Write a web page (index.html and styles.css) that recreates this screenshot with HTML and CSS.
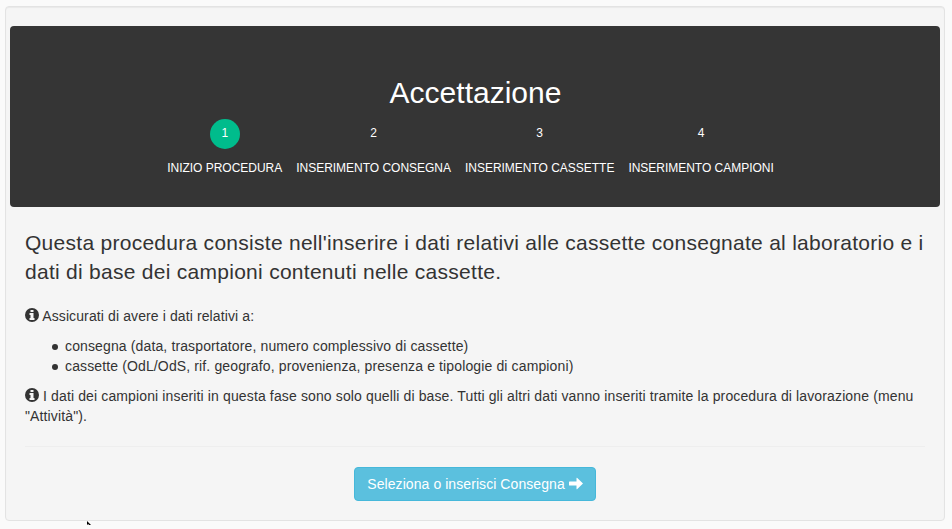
FILE: index.html
```html
<!DOCTYPE html>
<html lang="it">
<head>
<meta charset="utf-8">
<title>Accettazione</title>
<link rel="stylesheet" href="styles.css">
</head>
<body>
<main class="well">
  <header class="wizard">
    <h1>Accettazione</h1>
    <ol class="steps">
      <li><span class="num active">1</span><span class="label">Inizio procedura</span></li>
      <li><span class="num">2</span><span class="label">Inserimento consegna</span></li>
      <li><span class="num">3</span><span class="label">Inserimento cassette</span></li>
      <li><span class="num">4</span><span class="label">Inserimento campioni</span></li>
    </ol>
  </header>
  <section class="content">
    <p class="lead">Questa procedura consiste nell'inserire i dati relativi alle cassette consegnate al laboratorio e i dati di base dei campioni contenuti nelle cassette.</p>
    <p class="intro"><svg class="icon" viewBox="0 0 14 14"><circle cx="7" cy="7" r="7"/><path class="cut" d="M5.500 2h3v2h-3zM4.500 5h4v5h1v2h-5v-2h1V7h-1z"/></svg> Assicurati di avere i dati relativi a:</p>
    <ul>
      <li>consegna (data, trasportatore, numero complessivo di cassette)</li>
      <li>cassette (OdL/OdS, rif. geografo, provenienza, presenza e tipologie di campioni)</li>
    </ul>
    <p><svg class="icon" viewBox="0 0 14 14"><circle cx="7" cy="7" r="7"/><path class="cut" d="M5.500 2h3v2h-3zM4.500 5h4v5h1v2h-5v-2h1V7h-1z"/></svg> I dati dei campioni inseriti in questa fase sono solo quelli di base. Tutti gli altri dati vanno inseriti tramite la procedura di lavorazione (menu "Attività").</p>
    <hr>
    <div class="actions"><button class="btn" type="button">Seleziona o inserisci Consegna <svg class="icon" viewBox="0 0 14 14"><path d="M.5 5.500h7V2.300q0-1 .8-.3L14 7.500l-5.700 5.500q-.8.700-.8-.3V9.500h-7Q0 9.500 0 9V6q0-.5.500-.5z"/></svg></button></div>
  </section>
</main>
<svg class="cursor" viewBox="0 0 4 4"><path d="M0 0l4 4H2L1.200 3 0 4z"/></svg>
</body>
</html>
```
FILE: styles.css
```css
* { box-sizing: border-box; }
html { overflow: hidden; }
body {
  margin: 0;
  padding: 6px 7px 0 5px;
  background: #fafafa;
  color: #333;
  font: 14px/20px "Liberation Sans", Arial, sans-serif;
  letter-spacing: .13px;
}
.well {
  height: 515px;
  padding: 19px 4px 0;
  background: #f5f5f5;
  border: 1px solid #e3e3e3;
  border-radius: 4px;
  box-shadow: inset 0 1px 1px rgba(0, 0, 0, .05);
}
.wizard {
  height: 181px;
  padding-top: 50px;
  background: #353535;
  border-radius: 4px;
  color: #fff;
  text-align: center;
}
h1 { margin: 0; padding-left: 1px; font-size: 30px; line-height: 33px; font-weight: 400; letter-spacing: 0; }
.steps {
  display: flex;
  justify-content: center;
  gap: 14px;
  margin: 10px 9px 0 0;
  padding: 0;
  list-style: none;
  font-size: 12px;
  letter-spacing: -.02px;
}
.steps li { display: flex; flex-direction: column; align-items: center; }
.num { width: 30px; height: 30px; border-radius: 50%; line-height: 28px; }
.active { background: #00bc8c; }
.label { margin-top: 9px; line-height: 20px; text-transform: uppercase; }
.content { padding: 21px 15px 0; }
p { margin: 0 0 10px; }
.lead { margin-bottom: 19px; font-size: 21px; line-height: 29.400px; letter-spacing: .275px; }
.intro { letter-spacing: .11px; }
.icon { width: 14px; height: 14px; vertical-align: -1px; fill: currentColor; }
.cut { fill: #f5f5f5; }
ul { margin: 0 0 10px; padding-left: 40px; list-style: none; }
ul li { position: relative; }
ul li::before {
  content: "";
  position: absolute;
  left: -13px;
  top: 8px;
  width: 6px;
  height: 6px;
  border-radius: 50%;
  background: #333;
}
hr { margin: 20px 0; border: 0; border-top: 1px solid #eee; }
.actions { text-align: center; }
.btn {
  height: 34px;
  padding: 6px 12px;
  border: 1px solid #46b8da;
  border-radius: 4px;
  background: #5bc0de;
  color: #fff;
  font: inherit;
  letter-spacing: .07px;
}
.btn .icon { vertical-align: -1px; }
.cursor { position: absolute; left: 87px; top: 521px; width: 4px; height: 4px; }
```
